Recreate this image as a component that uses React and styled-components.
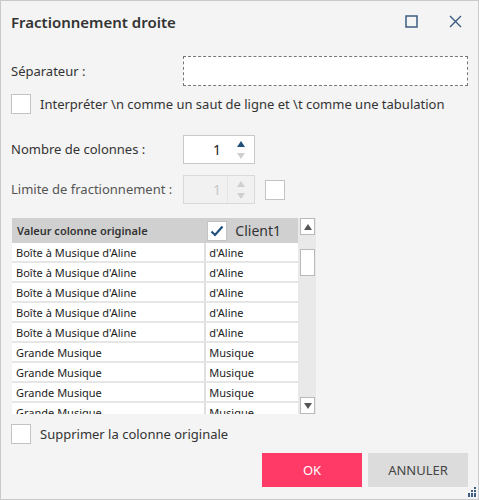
import React from "react";
import styled, { createGlobalStyle } from "styled-components";

const GlobalStyle = createGlobalStyle`
  html, body {
    margin: 0;
    padding: 0;
    background: #ffffff;
  }
  * {
    box-sizing: border-box;
  }
`;

const font = `"Segoe UI", "Noto Sans", "Open Sans", sans-serif`;

const StyledWindow = styled.div`
  position: relative;
  width: 479px;
  height: 500px;
  border: 1px solid #c9c9c9;
  background: #f4f4f4;
  font-family: ${font};
  color: #333;
  display: flex;
  flex-direction: column;
  padding: 0 10px;
`;
const StyledTitleBar = styled.div`
  height: 41px;
  display: flex;
  align-items: center;
  justify-content: space-between;
`;
const StyledTitle = styled.h1`
  margin: 0;
  font-size: 15px;
  font-weight: 600;
  color: #333;
`;
const StyledTitleButtons = styled.div`
  display: flex;
  align-items: center;
  gap: 31px;
  padding-right: 6px;
`;
const StyledRow = styled.div`
  display: flex;
  align-items: center;
  margin-top: ${({ $top }) => $top}px;
`;
const StyledLabel = styled.span`
  width: 172px;
  font-size: 13px;
  line-height: 17px;
  color: ${({ $disabled }) => ($disabled ? "#555" : "#333")};
`;
const StyledInput = styled.div`
  width: 285px;
  height: 30px;
  background: #fff;
  border: 1px dashed #777;
`;
const StyledCheckbox = styled.div`
  width: 20px;
  height: 20px;
  flex: none;
  background: #fff;
  border: 1px solid #c3c3c3;
  display: flex;
  align-items: center;
  justify-content: center;
  margin-left: ${({ $left }) => $left || 0}px;
`;
const StyledCheckLabel = styled.span`
  font-size: 13px;
  line-height: 17px;
  color: #333;
  margin-left: 9px;
`;
const StyledSpinner = styled.div`
  width: 72px;
  height: 29px;
  display: flex;
  background: ${({ $disabled }) => ($disabled ? "#f1f1f1" : "#fff")};
  border: 1px solid ${({ $disabled }) => ($disabled ? "#d9d9d9" : "#c9c9c9")};
`;
const StyledSpinValue = styled.div`
  flex: 1;
  display: flex;
  align-items: center;
  justify-content: flex-end;
  padding-right: 6px;
  font-size: 14px;
  color: ${({ $disabled }) => ($disabled ? "#c8c8c8" : "#222")};
  border-right: 1px solid ${({ $disabled }) => ($disabled ? "#e4e4e4" : "transparent")};
`;
const StyledSpinArrows = styled.div`
  width: 26px;
  display: flex;
  flex-direction: column;
  align-items: center;
  justify-content: center;
  gap: 6px;
`;
const StyledArrow = styled.span`
  width: 0;
  height: 0;
  border-left: 4px solid transparent;
  border-right: 4px solid transparent;
  ${({ $down, $color }) =>
    $down
      ? `border-top: 6px solid ${$color};`
      : `border-bottom: 6px solid ${$color};`}
`;
const StyledGrid = styled.div`
  margin-top: 14px;
  width: 305px;
  height: 196px;
  display: flex;
`;
const StyledGridBody = styled.div`
  flex: 1;
  display: flex;
  flex-direction: column;
  overflow: hidden;
  padding-left: 1px;
`;
const StyledHeader = styled.div`
  height: 25px;
  flex: none;
  display: flex;
  background: #d0d0d0;
`;
const StyledHeaderCell = styled.div`
  width: ${({ $w }) => $w}px;
  display: flex;
  align-items: center;
  padding-left: ${({ $pad }) => $pad}px;
  font-size: ${({ $bold }) => ($bold ? 11 : 14)}px;
  font-weight: ${({ $bold }) => ($bold ? 600 : 400)};
  color: #333;
  gap: 8px;
`;
const StyledDataRow = styled.div`
  height: 20px;
  flex: none;
  display: flex;
  background: #fff;
  border-bottom: 2px solid #e6e6e6;
`;
const StyledCell = styled.div`
  width: ${({ $w }) => $w}px;
  display: flex;
  align-items: center;
  padding-left: ${({ $pad }) => $pad}px;
  font-size: 11px;
  color: #222;
  white-space: nowrap;
  border-right: ${({ $sep }) => ($sep ? "2px solid #e0e0e0" : "none")};
`;
const StyledScrollbar = styled.div`
  width: 18px;
  flex: none;
  background: #e9e9e9;
  display: flex;
  flex-direction: column;
  align-items: center;
  padding: 0 1px 0 2px;
`;
const StyledScrollButton = styled.div`
  width: 15px;
  height: 17px;
  background: #fff;
  border: 1px solid #b9b9b9;
  display: flex;
  align-items: center;
  justify-content: center;
  margin-top: ${({ $auto }) => ($auto ? "auto" : "0")};
`;
const StyledThumb = styled.div`
  width: 15px;
  height: 27px;
  margin-top: 14px;
  background: #fff;
  border: 1px solid #b9b9b9;
`;
const StyledFooter = styled.div`
  display: flex;
  justify-content: flex-end;
  gap: 6px;
  margin-top: 9px;
`;
const StyledButton = styled.button`
  width: 100px;
  height: 34px;
  border: none;
  font-family: ${font};
  font-size: 13px;
  background: ${({ $primary }) => ($primary ? "#ff3a66" : "#dcdcdc")};
  color: ${({ $primary }) => ($primary ? "#fff" : "#444")};
`;
const StyledGrip = styled.svg`
  position: absolute;
  right: 2px;
  bottom: 2px;
`;

const rows = [
  ["Boîte à Musique d'Aline", "d'Aline"],
  ["Boîte à Musique d'Aline", "d'Aline"],
  ["Boîte à Musique d'Aline", "d'Aline"],
  ["Boîte à Musique d'Aline", "d'Aline"],
  ["Boîte à Musique d'Aline", "d'Aline"],
  ["Grande Musique", "Musique"],
  ["Grande Musique", "Musique"],
  ["Grande Musique", "Musique"],
  ["Grande Musique", "Musique"],
];

const Spinner = ({ disabled }) => (
  <StyledSpinner $disabled={disabled}>
    <StyledSpinValue $disabled={disabled}>1</StyledSpinValue>
    <StyledSpinArrows>
      <StyledArrow $color={disabled ? "#cfcfcf" : "#1f4f7a"} />
      <StyledArrow $down $color="#cfcfcf" />
    </StyledSpinArrows>
  </StyledSpinner>
);

const App = () => (
  <>
    <GlobalStyle />
    <StyledWindow>
      <StyledTitleBar>
        <StyledTitle>Fractionnement droite</StyledTitle>
        <StyledTitleButtons>
          <svg width="13" height="13" viewBox="0 0 13 13">
            <rect x="1" y="1" width="11" height="11" fill="none" stroke="#3d5c82" strokeWidth="1.5" />
          </svg>
          <svg width="13" height="13" viewBox="0 0 13 13">
            <path d="M1 1L12 12M12 1L1 12" stroke="#3d5c82" strokeWidth="1.4" />
          </svg>
        </StyledTitleButtons>
      </StyledTitleBar>

      <StyledRow $top={14}>
        <StyledLabel>Séparateur :</StyledLabel>
        <StyledInput />
      </StyledRow>

      <StyledRow $top={8}>
        <StyledCheckbox />
        <StyledCheckLabel>
          Interpréter \n comme un saut de ligne et \t comme une tabulation
        </StyledCheckLabel>
      </StyledRow>

      <StyledRow $top={21}>
        <StyledLabel>Nombre de colonnes :</StyledLabel>
        <Spinner />
      </StyledRow>

      <StyledRow $top={11}>
        <StyledLabel $disabled>Limite de fractionnement :</StyledLabel>
        <Spinner disabled />
        <StyledCheckbox $left={10} />
      </StyledRow>

      <StyledGrid>
        <StyledGridBody>
          <StyledHeader>
            <StyledHeaderCell $w={195} $pad={5} $bold>
              Valeur colonne originale
            </StyledHeaderCell>
            <StyledHeaderCell $w={92} $pad={1}>
              <StyledCheckbox>
                <svg width="14" height="12" viewBox="0 0 14 12">
                  <path d="M1.5 6.5L5 10L12.5 1.5" fill="none" stroke="#1f4f7a" strokeWidth="2.2" />
                </svg>
              </StyledCheckbox>
              Client1
            </StyledHeaderCell>
          </StyledHeader>
          {rows.map(([orig, client], i) => (
            <StyledDataRow key={i}>
              <StyledCell $w={195} $pad={4} $sep>
                {orig}
              </StyledCell>
              <StyledCell $w={92} $pad={3}>
                {client}
              </StyledCell>
            </StyledDataRow>
          ))}
        </StyledGridBody>
        <StyledScrollbar>
          <StyledScrollButton>
            <StyledArrow $color="#555" />
          </StyledScrollButton>
          <StyledThumb />
          <StyledScrollButton $auto>
            <StyledArrow $down $color="#555" />
          </StyledScrollButton>
        </StyledScrollbar>
      </StyledGrid>

      <StyledRow $top={10}>
        <StyledCheckbox />
        <StyledCheckLabel>Supprimer la colonne originale</StyledCheckLabel>
      </StyledRow>

      <StyledFooter>
        <StyledButton $primary>OK</StyledButton>
        <StyledButton>ANNULER</StyledButton>
      </StyledFooter>

      <StyledGrip width="10" height="10" viewBox="0 0 10 10">
        {[
          [8, 0], [8, 3], [5, 3], [8, 6], [5, 6], [2, 6], [8, 8], [5, 8], [2, 8],
        ].map(([x, y], i) => (
          <rect key={i} x={x} y={y} width="2" height="2" fill="#3d5c82" />
        ))}
      </StyledGrip>
    </StyledWindow>
  </>
);

export default App;
